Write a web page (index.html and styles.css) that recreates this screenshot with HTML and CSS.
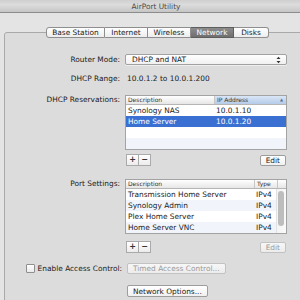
FILE: index.html
```html
<!DOCTYPE html>
<html lang="en">
<head>
    <meta charset="UTF-8">
    <title>AirPort Utility</title>
    <link rel="stylesheet" href="styles.css">
</head>
<body>
    <div class="window">
        <div class="titlebar">AirPort Utility</div>
        <div class="tabs">
            <span class="tab">Base Station</span>
            <span class="tab">Internet</span>
            <span class="tab">Wireless</span>
            <span class="tab active">Network</span>
            <span class="tab">Disks</span>
        </div>
        <div class="panel">
            <div class="form">
                <label class="lbl">Router Mode:</label>
                <div class="popup">
                    <span>DHCP and NAT</span>
                    <svg class="arrows" width="5" height="8" viewBox="0 0 5 8">
                        <path d="M0.5 3 L2.5 0.8 L4.5 3 Z M0.5 5 L2.5 7.2 L4.5 5 Z" fill="#333"/>
                    </svg>
                </div>

                <label class="lbl range-lbl">DHCP Range:</label>
                <div class="value range">10.0.1.2 to 10.0.1.200</div>

                <label class="lbl table-lbl reserve-lbl">DHCP Reservations:</label>
                <div class="block reserve">
                    <div class="table">
                        <div class="head">
                            <span class="col desc">Description</span>
                            <span class="col ip sorted">IP Address <i>&#9650;</i></span>
                        </div>
                        <div class="row"><span class="col desc">Synology NAS</span><span class="col ip">10.0.1.10</span></div>
                        <div class="row selected"><span class="col desc">Home Server</span><span class="col ip">10.0.1.20</span></div>
                        <div class="row"></div>
                        <div class="row"></div>
                    </div>
                    <div class="controls">
                        <div class="pm"><span>+</span><span>&minus;</span></div>
                        <button class="btn">Edit</button>
                    </div>
                </div>

                <label class="lbl table-lbl port-lbl">Port Settings:</label>
                <div class="block ports">
                    <div class="table">
                        <div class="head">
                            <span class="col pdesc">Description</span>
                            <span class="col type">Type</span>
                            <span class="col sb"></span>
                        </div>
                        <div class="scroll-body">
                            <div class="rows">
                                <div class="row"><span class="col pdesc">Transmission Home Server</span><span class="col type">IPv4</span></div>
                                <div class="row"><span class="col pdesc">Synology Admin</span><span class="col type">IPv4</span></div>
                                <div class="row"><span class="col pdesc">Plex Home Server</span><span class="col type">IPv4</span></div>
                                <div class="row"><span class="col pdesc">Home Server VNC</span><span class="col type">IPv4</span></div>
                            </div>
                            <div class="scrollbar"><div class="thumb"></div></div>
                        </div>
                    </div>
                    <div class="controls">
                        <div class="pm"><span>+</span><span>&minus;</span></div>
                        <button class="btn disabled">Edit</button>
                    </div>
                </div>

                <label class="lbl access-lbl"><span class="check"></span>Enable Access Control:</label>
                <div class="access">
                    <button class="btn disabled">Timed Access Control...</button>
                </div>

                <span></span>
                <div class="options">
                    <button class="btn">Network Options...</button>
                </div>
            </div>
        </div>
    </div>
</body>
</html>
```

FILE: styles.css
```css
body {
    margin: 0;
    padding: 0;
    background-color: #e4e4e4;
    font-family: "DejaVu Sans", Verdana, sans-serif;
    font-size: 7.4px;
    color: #1a1a1a;
    overflow: hidden;
}
.window {
    width: 300px;
    height: 300px;
    overflow: hidden;
}
.titlebar {
    height: 12px;
    line-height: 14px;
    padding-left: 12px;
    text-align: center;
    color: #4a4a4a;
    background: linear-gradient(#cfcfcf, #dcdcdc 40%, #c6c6c6);
    border-bottom: 1px solid #8c8c8c;
}
.tabs {
    position: relative;
    z-index: 2;
    display: flex;
    margin: 14px 0 0 46px;
    height: 11px;
}
.tab {
    display: flex;
    align-items: center;
    justify-content: center;
    height: 9px;
    padding: 0;
    border: 1px solid #8e8e8e;
    border-left: none;
    background: linear-gradient(#ffffff, #ededed);
    color: #1a1a1a;
}
.tab:nth-child(1) { width: 57px; border-left: 1px solid #8e8e8e; border-radius: 3px 0 0 3px; }
.tab:nth-child(2) { width: 42px; }
.tab:nth-child(3) { width: 42px; }
.tab:nth-child(4) { width: 42px; }
.tab:nth-child(5) { width: 34px; border-radius: 0 3px 3px 0; }
.tab.active {
    background: linear-gradient(#8c8c8c, #6f6f6f);
    border-color: #5e5e5e;
    color: #fff;
}
.panel {
    position: relative;
    z-index: 1;
    margin: -6px -10px 0 4px;
    height: 300px;
    border: 1px solid #a9a9a9;
    border-radius: 3px;
    background-color: #dcdcdc;
}
.form {
    display: grid;
    grid-template-columns: 115px 162px;
    column-gap: 5px;
    align-items: center;
    padding-top: 21px;
}
.lbl {
    text-align: right;
    line-height: 10px;
}
.popup {
    height: 9px;
    display: flex;
    align-items: center;
    justify-content: space-between;
    padding: 0 5px 0 6px;
    border: 1px solid #a2a2a2;
    border-radius: 2px;
    background: linear-gradient(#ffffff, #f0f0f0);
    box-shadow: 0 1px 0 rgba(255, 255, 255, 0.5);
}
.arrows {
    display: block;
}
.range-lbl, .range {
    margin-top: 9px;
    line-height: 10px;
}
.range {
    padding-left: 2px;
}
.table-lbl {
    align-self: start;
}
.reserve-lbl, .reserve {
    margin-top: 11px;
}
.port-lbl, .ports {
    margin-top: 13px;
}
.reserve-lbl, .port-lbl {
    padding-top: 0;
}
.table {
    border: 1px solid #a3a3a3;
    background-color: #fff;
}
.head {
    display: flex;
    height: 8px;
    line-height: 8px;
    font-size: 6px;
    color: #333;
    background: linear-gradient(#ffffff, #e6e6e6);
    border-bottom: 1px solid #b5b5b5;
}
.head .col {
    border-right: 1px solid #c7c7c7;
    padding-left: 2px;
}
.row {
    display: flex;
    height: 11px;
    line-height: 11px;
}
.row:nth-child(odd) {
    background-color: #f1f5fb;
}
.row.selected {
    background-color: #3a70d2;
    color: #fff;
}
.row .col {
    padding-left: 2px;
}
.desc { width: 86px; }
.ip { flex: 1; }
.head .ip {
    border-right: none;
    display: flex;
    justify-content: space-between;
    padding-right: 3px;
}
.sorted {
    background: linear-gradient(#d9e6f6, #b5cbe9);
}
.sorted i {
    font-style: normal;
    font-size: 4px;
    color: #5a6f8c;
}
.pdesc { width: 126px; }
.type { width: 20px; }
.head .sb {
    flex: 1;
    border-right: none;
}
.scroll-body {
    display: flex;
}
.rows {
    flex: 1;
}
.ports .row:nth-child(odd) {
    background-color: #fff;
}
.ports .row:nth-child(even) {
    background-color: #f1f5fb;
}
.scrollbar {
    width: 9px;
    background: linear-gradient(90deg, #f4f4f4, #fafafa);
    border-left: 1px solid #e2e2e2;
    padding-top: 2px;
}
.thumb {
    width: 6px;
    height: 35px;
    margin-left: 1px;
    border-radius: 3px;
    background-color: #bdbdbd;
}
.controls {
    display: flex;
    justify-content: space-between;
    align-items: center;
    margin-top: 4px;
}
.ports .controls {
    margin-top: 7px;
}
.pm {
    display: flex;
    margin-left: 1px;
}
.pm span {
    width: 11px;
    height: 10px;
    line-height: 10px;
    text-align: center;
    font-size: 8px;
    font-weight: bold;
    color: #333;
    border: 1px solid #aaa;
    background: linear-gradient(#ffffff, #ececec);
}
.pm span + span {
    border-left: none;
}
.btn {
    font-family: inherit;
    font-size: 7.4px;
    height: 11px;
    line-height: 9px;
    padding: 0 5px;
    margin: 0 1px 0 2px;
    border: 1px solid #9d9d9d;
    border-radius: 2px;
    color: #1a1a1a;
    background: linear-gradient(#ffffff, #f0f0f0);
}
.btn.disabled {
    color: #9a9a9a;
    border-color: #c2c2c2;
    background: linear-gradient(#f7f7f7, #ececec);
}
.access-lbl, .access {
    margin-top: 10px;
}
.access-lbl {
    display: flex;
    align-items: center;
    justify-content: flex-end;
    margin-right: -2px;
}
.check {
    width: 7px;
    height: 7px;
    margin-right: 3px;
    border: 1px solid #8f8f8f;
    border-radius: 1px;
    background: linear-gradient(#ffffff, #eaeaea);
}
.options {
    margin-top: 11px;
}
.options .btn {
    height: 12px;
}
```
